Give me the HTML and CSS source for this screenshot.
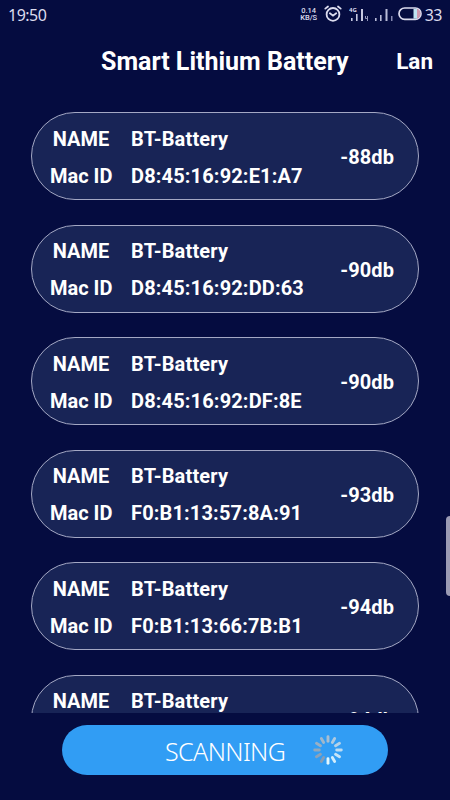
FILE: index.html
```
<!DOCTYPE html>
<html lang="en">
<head>
  <meta charset="UTF-8">
  <meta name="viewport" content="width=device-width, initial-scale=1.0">
  <title>Smart Lithium Battery</title>
  <link rel="stylesheet" href="styles.css">
</head>

<body>
  <div class="status-bar">
    <span class="clock">19:50</span>
    <div class="status-icons">
      <div class="net-speed"><span>0.14</span><span>KB/S</span></div>
      <svg class="alarm" width="18" height="18" viewBox="0 0 18 18" fill="none" stroke="#dcdcee" stroke-width="1.8" stroke-linecap="round">
        <circle cx="9" cy="9.4" r="6.4"/>
        <path d="M1.3 3.6 4 1.5M16.7 3.6 14 1.5M5.9 8.2 9 10.6 12.2 8.2"/>
      </svg>
      <svg class="signal" width="20" height="16" viewBox="0 0 20 16">
        <g fill="#c6c8e0">
          <rect x="2" y="12" width="1.6" height="3"/>
          <rect x="7" y="8" width="1.6" height="7"/>
          <rect x="12" y="3" width="2" height="12"/>
        </g>
        <path d="M16.5 10v2.5h2.5M18.500 10v5" fill="none" stroke="#9497bb"/>
        <text x="0" y="6">4G</text>
      </svg>
      <svg class="signal-two" width="18" height="16" viewBox="0 0 18 16">
        <g fill="#b9bcd8">
          <rect x="0" y="12" width="1.6" height="3"/>
          <rect x="5" y="9" width="1.6" height="6"/>
          <rect x="10.500" y="3" width="2" height="12"/>
        </g>
        <rect x="16" y="10" width="1.5" height="5" fill="#8588b0"/>
      </svg>
      <svg class="battery" width="24" height="14" viewBox="0 0 24 14">
        <rect x="1" y="1" width="22" height="11.4" rx="5.7" fill="none" stroke="#dcdcee" stroke-width="1.7"/>
        <path d="M15.5 1.8H19v9.8h-3.5z" fill="#bfe4f2"/>
        <path d="M19 1.8c4.6 1 4.6 8.8 0 9.8z" fill="#cf9bb0"/>
      </svg>
      <span class="battery-level">33</span>
    </div>
  </div>

  <div class="header">
    <div class="title">Smart Lithium Battery</div>
    <div class="lang">Lan</div>
  </div>

  <div class="device-list">
    <div class="device">
      <div class="label">NAME</div><div class="value">BT-Battery</div>
      <div class="label">Mac ID</div><div class="value">D8:45:16:92:E1:A7</div>
      <div class="signal-db">-88db</div>
    </div>
    <div class="device">
      <div class="label">NAME</div><div class="value">BT-Battery</div>
      <div class="label">Mac ID</div><div class="value">D8:45:16:92:DD:63</div>
      <div class="signal-db">-90db</div>
    </div>
    <div class="device">
      <div class="label">NAME</div><div class="value">BT-Battery</div>
      <div class="label">Mac ID</div><div class="value">D8:45:16:92:DF:8E</div>
      <div class="signal-db">-90db</div>
    </div>
    <div class="device">
      <div class="label">NAME</div><div class="value">BT-Battery</div>
      <div class="label">Mac ID</div><div class="value">F0:B1:13:57:8A:91</div>
      <div class="signal-db">-93db</div>
    </div>
    <div class="device">
      <div class="label">NAME</div><div class="value">BT-Battery</div>
      <div class="label">Mac ID</div><div class="value">F0:B1:13:66:7B:B1</div>
      <div class="signal-db">-94db</div>
    </div>
    <div class="device">
      <div class="label">NAME</div><div class="value">BT-Battery</div>
      <div class="label"></div><div class="value"></div>
      <div class="signal-db">-94db</div>
    </div>
  </div>

  <div class="scan-button">
    <span class="scan-text">SCANNING</span>
    <svg class="spinner" width="30" height="30" viewBox="-15 -15 30 30" stroke-width="2.9" stroke-linecap="round">
      <path stroke="#a9bfd2" d="M0-8.7v-4.6"/>
      <path stroke="#aecae0" d="M0-8.7v-4.6" transform="rotate(30)"/>
      <path stroke="#b5d2e8" d="M0-8.7v-4.6" transform="rotate(60)"/>
      <path stroke="#bddcf2" d="M0-8.7v-4.6" transform="rotate(90)"/>
      <path stroke="#c6e4f7" d="M0-8.7v-4.6" transform="rotate(120)"/>
      <path stroke="#d2edfb" d="M0-8.7v-4.6" transform="rotate(150)"/>
      <path stroke="#e2f8ff" d="M0-8.7v-4.6" transform="rotate(180)"/>
      <path stroke="#879db4" d="M0-8.7v-4.6" transform="rotate(210)"/>
      <path stroke="#8ca2b8" d="M0-8.7v-4.6" transform="rotate(240)"/>
      <path stroke="#92a8bc" d="M0-8.7v-4.6" transform="rotate(270)"/>
      <path stroke="#99afc4" d="M0-8.7v-4.6" transform="rotate(300)"/>
      <path stroke="#a0b7cb" d="M0-8.7v-4.6" transform="rotate(330)"/>
    </svg>
  </div>

  <div class="edge-handle"></div>
</body>
</html>
```
FILE: styles.css
```
body {
  background-color: #050c40;
  color: #fff;
  font-family: Roboto, sans-serif;
  margin: 0;
  height: 100vh;
  display: flex;
  flex-direction: column;
  position: relative;
  overflow: hidden;
}

.status-bar {
  display: flex;
  justify-content: space-between;
  align-items: center;
  height: 30px;
  padding: 0 8px;
  box-sizing: border-box;
  color: #dcdcee;
  font-family: "Noto Sans", sans-serif;
}

.clock {
  font-size: 16px;
  letter-spacing: -0.5px;
}

.status-icons {
  display: flex;
  align-items: center;
}

.net-speed {
  display: flex;
  flex-direction: column;
  align-items: center;
  width: 18px;
  margin-right: 6px;
  margin-bottom: 3px;
  font-family: Roboto, sans-serif;
  font-size: 7.5px;
  font-weight: 500;
}

.net-speed span {
  line-height: 7px;
}

.alarm {
  margin-right: 7px;
  margin-bottom: 3px;
}

.signal {
  margin-right: 6px;
  margin-bottom: 3px;
}

.signal text {
  fill: #dcdcee;
  font-size: 6px;
  font-weight: 700;
}

.signal-two {
  margin-right: 5px;
  margin-bottom: 3px;
}

.battery {
  margin-bottom: 3px;
}

.battery-level {
  margin-left: 3px;
  font-size: 16px;
  letter-spacing: -0.5px;
}

.header {
  display: flex;
  align-items: center;
  height: 62px;
  padding: 0 17px 0 101px;
  justify-content: space-between;
}

.title {
  font-size: 25px;
  font-weight: 700;
}

.lang {
  font-size: 22.5px;
  font-weight: 700;
}

.device-list {
  height: 620.5px;
  padding: 20px 31px 0;
  box-sizing: border-box;
  overflow: hidden;
}

.device {
  display: grid;
  grid-template-columns: 62px 1fr auto;
  grid-template-rows: 37px 37px;
  column-gap: 19px;
  align-items: center;
  align-content: center;
  height: 88px;
  margin-bottom: 24.5px;
  padding: 2px 24px 0 18px;
  box-sizing: border-box;
  background-color: #182456;
  border: 1px solid #a4a8c4;
  border-radius: 44px;
  font-size: 20px;
  font-weight: 700;
}

.label {
  text-align: center;
  white-space: nowrap;
}

.value {
  letter-spacing: 0.15px;
}

.signal-db {
  grid-column: 3;
  grid-row: 1 / 3;
  letter-spacing: 0.1px;
}

.scan-button {
  display: flex;
  align-items: center;
  width: 326px;
  height: 50px;
  margin: 12.5px 0 0 62px;
  padding: 0 45px 0 103px;
  box-sizing: border-box;
  justify-content: space-between;
  background-color: #319df4;
  border-radius: 25px;
}

.scan-text {
  padding-top: 2px;
  font-family: "Noto Sans", sans-serif;
  font-size: 25px;
  font-weight: 300;
  letter-spacing: -0.6px;
}

.edge-handle {
  position: absolute;
  top: 516px;
  right: 0;
  width: 4px;
  height: 80px;
  background-color: #9b9bb4;
  border-radius: 4px 0 0 4px;
}
```
